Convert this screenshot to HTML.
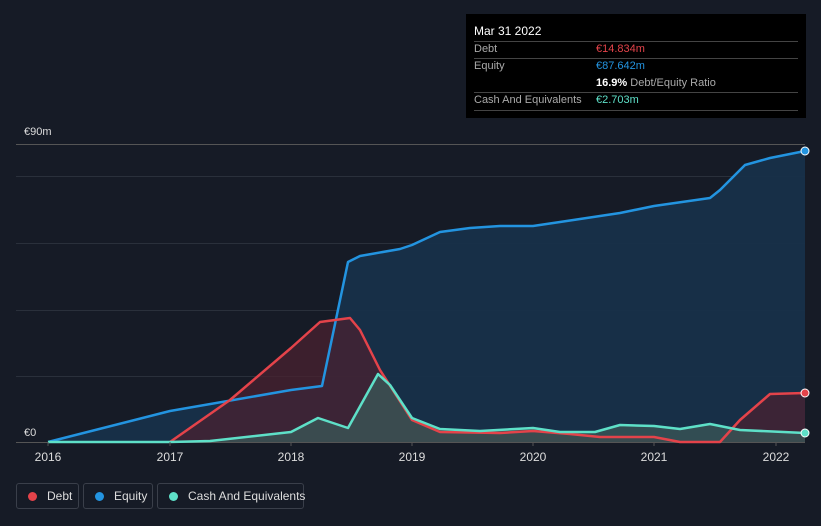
<!DOCTYPE html><html><head><style>
body{margin:0;width:821px;height:526px;background:#161b26;font-family:"Liberation Sans",sans-serif;overflow:hidden;position:relative}
.tt{position:absolute;left:466px;top:14px;width:340px;height:104px;background:#000;color:#fff;font-size:11px}
.r{position:absolute;left:8px;right:8px;border-top:1px solid #444}
.l{position:absolute;left:8px;color:#aaa}.v{position:absolute;left:130px}
.lg{position:absolute;top:483px;height:26px;border:1px solid #3a3f4a;border-radius:3px;color:#ddd;font-size:12px;line-height:25px;box-sizing:border-box;white-space:nowrap}
.lg i{display:inline-block;width:9px;height:9px;border-radius:50%;margin:0 10px 0 11px;vertical-align:-1px}
</style></head><body>
<svg width="821" height="526" style="position:absolute;left:0;top:0">
<g stroke="#2a303b" stroke-width="1"><line x1="16" x2="805" y1="144.5" y2="144.5" stroke="#555"/><line x1="16" x2="805" y1="176.5" y2="176.5"/><line x1="16" x2="805" y1="243.5" y2="243.5"/><line x1="16" x2="805" y1="310.5" y2="310.5"/><line x1="16" x2="805" y1="376.5" y2="376.5"/><line x1="16" x2="805" y1="442.5" y2="442.5" stroke="#555"/></g>
<path d="M48,442 L170,411 L291,390 L322,386 L348,262 L360,256 L400,249 L412,245 L440,232 L470,228 L500,226 L533,226 L560,222 L620,213 L654,206 L710,198 L720,190 L745,165 L770,158 L805,151 L805,442 Z" fill="#173049" opacity=".95"/>
<path d="M170,442 L230,400 L291,348 L320,322 L350,318 L360,330 L380,370 L412,420 L440,432 L500,433 L533,431 L570,434 L600,437 L654,437 L680,442 L720,442 L740,420 L770,394 L805,393 L805,442 Z" fill="#4a2230" opacity=".75"/>
<path d="M48,442 L170,442 L210,441 L291,432 L318,418 L348,428 L378,374 L390,385 L412,418 L440,429 L480,431 L533,428 L560,432 L595,432 L620,425 L654,426 L680,429 L710,424 L740,430 L805,433 L805,442 Z" fill="#3a5556" opacity=".8"/>
<path d="M48,442 L170,411 L291,390 L322,386 L348,262 L360,256 L400,249 L412,245 L440,232 L470,228 L500,226 L533,226 L560,222 L620,213 L654,206 L710,198 L720,190 L745,165 L770,158 L805,151" fill="none" stroke="#2394e0" stroke-width="2.5" stroke-linejoin="round"/>
<path d="M170,442 L230,400 L291,348 L320,322 L350,318 L360,330 L380,370 L412,420 L440,432 L500,433 L533,431 L570,434 L600,437 L654,437 L680,442 L720,442 L740,420 L770,394 L805,393" fill="none" stroke="#e4434a" stroke-width="2.5" stroke-linejoin="round"/>
<path d="M48,442 L170,442 L210,441 L291,432 L318,418 L348,428 L378,374 L390,385 L412,418 L440,429 L480,431 L533,428 L560,432 L595,432 L620,425 L654,426 L680,429 L710,424 L740,430 L805,433" fill="none" stroke="#5ee0c8" stroke-width="2.5" stroke-linejoin="round"/>
<circle cx="805" cy="151" r="4" fill="#2394e0" stroke="#fff"/><circle cx="805" cy="393" r="4" fill="#e4434a" stroke="#fff"/><circle cx="805" cy="433" r="4" fill="#5ee0c8" stroke="#fff"/>
<g fill="#ddd" font-size="11" font-family="Liberation Sans"><text x="24" y="135">€90m</text><text x="24" y="436">€0</text>
<g text-anchor="middle" font-size="12"><text x="48" y="461">2016</text><text x="170" y="461">2017</text><text x="291" y="461">2018</text><text x="412" y="461">2019</text><text x="533" y="461">2020</text><text x="654" y="461">2021</text><text x="776" y="461">2022</text></g></g>
<g stroke="#555"><line x1="48" x2="48" y1="442" y2="446"/><line x1="170" x2="170" y1="442" y2="446"/><line x1="291" x2="291" y1="442" y2="446"/><line x1="412" x2="412" y1="442" y2="446"/><line x1="533" x2="533" y1="442" y2="446"/><line x1="654" x2="654" y1="442" y2="446"/><line x1="776" x2="776" y1="442" y2="446"/></g>
</svg>
<div class="tt">
<div style="position:absolute;left:8px;top:10px;font-size:12px">Mar 31 2022</div>
<div class="r" style="top:27px"></div><div class="l" style="top:29px">Debt</div><div class="v" style="top:29px;color:#e4434a">€14.834m</div>
<div class="r" style="top:44px"></div><div class="l" style="top:46px">Equity</div><div class="v" style="top:46px;color:#2394e0">€87.642m</div>
<div class="v" style="top:63px"><b>16.9%</b> <span style="color:#aaa">Debt/Equity Ratio</span></div>
<div class="r" style="top:78px"></div><div class="l" style="top:80px">Cash And Equivalents</div><div class="v" style="top:80px;color:#5ee0c8">€2.703m</div>
<div class="r" style="top:96px"></div>
</div>
<div class="lg" style="left:16px;width:63px"><i style="background:#e4434a"></i>Debt</div>
<div class="lg" style="left:83px;width:70px"><i style="background:#2394e0"></i>Equity</div>
<div class="lg" style="left:157px;width:147px"><i style="background:#5ee0c8"></i>Cash And Equivalents</div>
</body></html>
